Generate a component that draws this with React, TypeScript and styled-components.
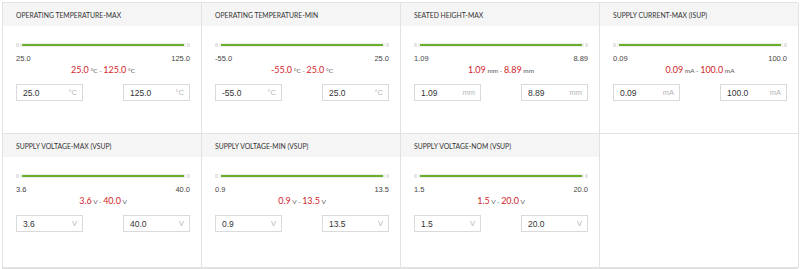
import React from "react";
import styled, { createGlobalStyle } from "styled-components";

const Global = createGlobalStyle`
  html, body { margin: 0; padding: 0; background: #fff; }
  body { font-family: Lato, "Open Sans", Arial, sans-serif; }
`;

const Grid = styled.div`
  margin: 2px 0 0 2px;
  width: 796px;
  display: grid;
  grid-template-columns: repeat(4, 199px);
  grid-template-rows: 131px 134px;
  border-top: 1px solid #e2e2e2;
  border-left: 1px solid #e2e2e2;
  border-bottom: 1px solid #e2e2e2;
  box-sizing: border-box;
`;

const Cell = styled.div`
  border-right: 1px solid #e2e2e2;
  border-bottom: 1px solid #e2e2e2;
  display: flex;
  flex-direction: column;
  min-width: 0;
`;

const Header = styled.div`
  height: 23px;
  background: #f5f5f5;
  display: flex;
  align-items: center;
  padding-left: 13px;
  font-size: 6.8px;
  color: #333;
  text-transform: uppercase;
  white-space: nowrap;
`;

const Body = styled.div`
  padding: 17px 11px 0 13px;
  display: flex;
  flex-direction: column;
`;

const Slider = styled.div`
  display: flex;
  align-items: center;
  height: 4px;
  gap: 1px;
`;

const Handle = styled.div`
  width: 3px;
  height: 4px;
  background: #e6e6e6;
  flex: none;
`;

const Track = styled.div`
  flex: 1;
  height: 4px;
  background: #efefef;
  display: flex;
  align-items: center;
  padding: 0 2px;
`;

const Fill = styled.div`
  flex: 1;
  height: 2px;
  background: #6aaf2a;
`;

const Ends = styled.div`
  display: flex;
  justify-content: space-between;
  margin-top: 7px;
  font-family: "Liberation Sans", Arial, sans-serif;
  font-size: 7.5px;
  line-height: 9px;
  color: #444;
`;

const Range = styled.div`
  text-align: center;
  margin-top: 1px;
  line-height: 11px;
  font-size: 6.5px;
  color: #555;
`;

const Num = styled.span`
  color: #d2262d;
  font-size: 9px;
`;

const Inputs = styled.div`
  display: flex;
  justify-content: space-between;
  margin-top: 8px;
`;

const Field = styled.div`
  width: 67px;
  height: 17px;
  box-sizing: border-box;
  border: 1px solid #dadada;
  display: flex;
  align-items: center;
  justify-content: space-between;
  padding: 0 5px 0 6px;
  background: #fff;
`;

const Value = styled.span`
  font-family: "Liberation Sans", Arial, sans-serif;
  font-size: 8.5px;
  color: #333;
`;

const Unit = styled.span`
  font-family: "Liberation Sans", Arial, sans-serif;
  font-size: 7.5px;
  color: #b5b5b5;
`;

type Item = { title: string; min: string; max: string; unit: string };

const items: Item[] = [
  { title: "Operating Temperature-Max", min: "25.0", max: "125.0", unit: "°C" },
  { title: "Operating Temperature-Min", min: "-55.0", max: "25.0", unit: "°C" },
  { title: "Seated Height-Max", min: "1.09", max: "8.89", unit: "mm" },
  { title: "Supply Current-Max (Isup)", min: "0.09", max: "100.0", unit: "mA" },
  { title: "Supply Voltage-Max (Vsup)", min: "3.6", max: "40.0", unit: "V" },
  { title: "Supply Voltage-Min (Vsup)", min: "0.9", max: "13.5", unit: "V" },
  { title: "Supply Voltage-Nom (Vsup)", min: "1.5", max: "20.0", unit: "V" },
];

const Filter: React.FC<{ item: Item }> = ({ item }) => (
  <Cell>
    <Header>{item.title}</Header>
    <Body>
      <Slider>
        <Handle />
        <Track>
          <Fill />
        </Track>
        <Handle />
      </Slider>
      <Ends>
        <span>{item.min}</span>
        <span>{item.max}</span>
      </Ends>
      <Range>
        <Num>{item.min}</Num> {item.unit} - <Num>{item.max}</Num> {item.unit}
      </Range>
      <Inputs>
        <Field>
          <Value>{item.min}</Value>
          <Unit>{item.unit}</Unit>
        </Field>
        <Field>
          <Value>{item.max}</Value>
          <Unit>{item.unit}</Unit>
        </Field>
      </Inputs>
    </Body>
  </Cell>
);

export default function App() {
  return (
    <>
      <Global />
      <Grid>
        {items.map((it) => (
          <Filter key={it.title} item={it} />
        ))}
        <Cell />
      </Grid>
    </>
  );
}
